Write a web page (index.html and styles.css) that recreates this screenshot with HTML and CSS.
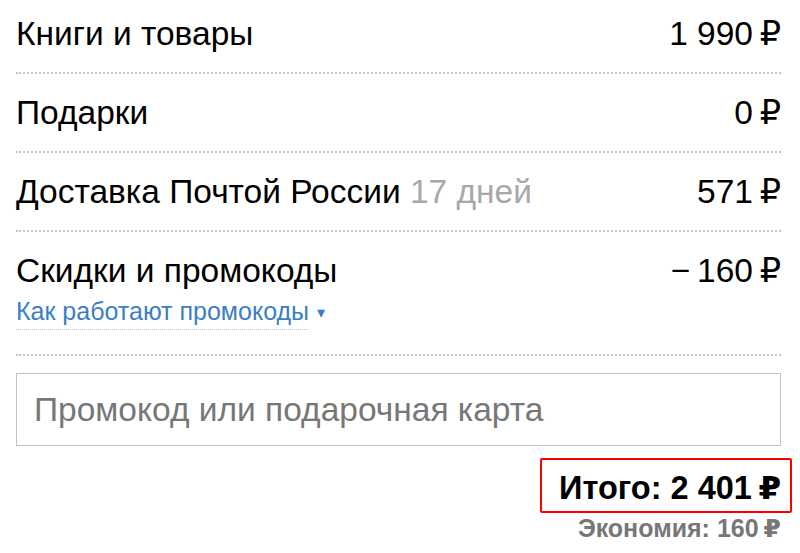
FILE: index.html
```html
<!DOCTYPE html>
<html lang="ru">
<head>
<meta charset="utf-8">
<link rel="stylesheet" href="styles.css">
</head>
<body>
<div class="summary">
  <div class="row first">
    <div class="line"><span class="label">Книги и товары</span><span class="value">1 990&#8201;₽</span></div>
  </div>
  <div class="row">
    <div class="line"><span class="label">Подарки</span><span class="value">0&#8201;₽</span></div>
  </div>
  <div class="row">
    <div class="line"><span class="label">Доставка Почтой России <span class="muted">17 дней</span></span><span class="value">571&#8201;₽</span></div>
  </div>
  <div class="row promo">
    <div class="line"><span class="label">Скидки и промокоды</span><span class="value">−&#8201;160&#8201;₽</span></div>
    <div class="help"><span class="link">Как работают промокоды</span><span class="caret">▾</span></div>
  </div>
  <div class="input-box"><span class="placeholder">Промокод или подарочная карта</span></div>
  <div class="total-wrap">
    <div class="total">Итого: 2 401&#8201;₽</div>
  </div>
  <div class="saving">Экономия: 160&#8201;₽</div>
</div>
</body>
</html>
```

FILE: styles.css
```css
html, body {
  margin: 0;
  padding: 0;
  background: #fff;
}
body {
  font-family: "Liberation Sans", Arial, "DejaVu Sans", sans-serif;
  color: #000;
}
.summary {
  width: 765px;
  margin-left: 16px;
}
.row {
  padding: 20px 0 19px;
  border-bottom: 2px dotted #c4c4c4;
}
.row.first {
  padding-top: 15px;
}
.line {
  display: flex;
  justify-content: space-between;
  font-size: 33.5px;
  line-height: 38px;
}
.value {
  white-space: nowrap;
}
.muted {
  color: #a8a8a8;
}
.row.promo {
  padding-bottom: 27px;
}
.help {
  margin-top: 7px;
  font-size: 25px;
  line-height: 28px;
  color: #3c7ec5;
}
.link {
  padding-bottom: 4px;
  border-bottom: 1px dotted #a9c6e6;
}
.caret {
  font-size: 16px;
  margin-left: 8px;
  vertical-align: 2px;
}
.input-box {
  margin-top: 17px;
  height: 71px;
  border: 1px solid #c2c2c2;
  display: flex;
  align-items: center;
  padding-left: 17px;
  font-size: 33.5px;
  color: #777;
}
.total-wrap {
  display: flex;
  justify-content: flex-end;
  margin-top: 12px;
  margin-right: -11px;
}
.total {
  border: 2px solid #f00;
  border-radius: 2px;
  padding: 9px 9px 4px 17px;
  font-size: 32.5px;
  line-height: 38px;
  font-weight: bold;
  white-space: nowrap;
}
.saving {
  text-align: right;
  font-size: 25px;
  line-height: 28px;
  margin-top: 1px;
  font-weight: bold;
  color: #777;
}
```
